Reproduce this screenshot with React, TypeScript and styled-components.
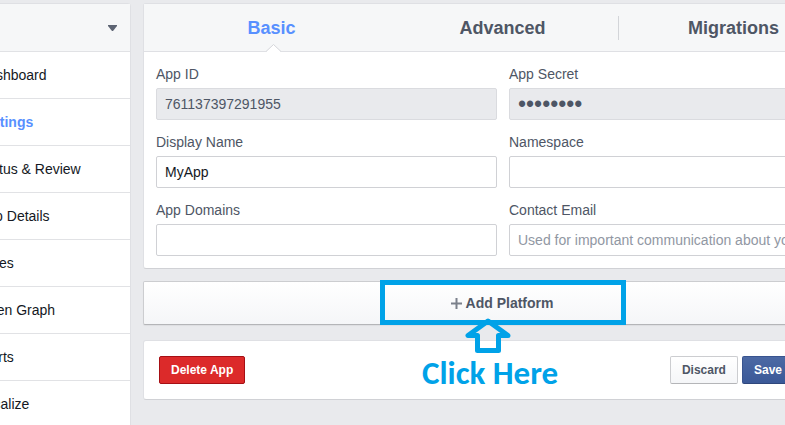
import React from "react";
import styled, { createGlobalStyle } from "styled-components";

const GlobalStyle = createGlobalStyle`
  *, *::before, *::after { box-sizing: border-box; }
  body {
    margin: 0;
    overflow: hidden;
    background: #e9eaed;
    color: #4e5665;
    font-family: "Liberation Sans", Arial, sans-serif;
    font-size: 14px;
    line-height: 20px;
  }
  button, input { font: inherit; }
`;

const Page = styled.div`
  display: flex;
  align-items: flex-start;
  gap: 12px;
  min-height: 100vh;
  padding-top: 3px;
`;

const Sidebar = styled.nav`
  flex: none;
  width: 168px;
  margin-left: -37px;
  background: #fff;
  border: 1px solid #dfe0e4;
  border-radius: 3px;
`;

const AppSwitcher = styled.button`
  display: flex;
  align-items: center;
  justify-content: flex-end;
  width: 100%;
  height: 47px;
  padding: 0 13px;
  border: 0;
  background: #f6f7f8;
`;

const SideLink = styled.a<{ $active?: boolean }>`
  display: block;
  padding: 13px 14px;
  border-top: 1px solid #e1e2e5;
  color: ${(p) => (p.$active ? "#5890ff" : "#141823")};
  font-weight: ${(p) => (p.$active ? "bold" : "normal")};
  text-decoration: none;
  white-space: nowrap;
`;

const Main = styled.main`
  flex: 1;
  min-width: 0;
  margin-right: -78px;
`;

const Card = styled.section`
  background: #fff;
  border: 1px solid #dfe0e4;
  border-bottom-color: #d0d1d5;
  border-radius: 3px;
`;

const Tabs = styled.div`
  display: grid;
  grid-template-columns: repeat(3, 1fr);
  padding: 0 13px 0 12px;
  background: #f6f7f8;
  border-bottom: 1px solid #dfe0e4;
`;

const Tab = styled.button<{ $active?: boolean }>`
  position: relative;
  height: 47px;
  padding: 0;
  border: 0;
  background: none;
  color: ${(p) => (p.$active ? "#5890ff" : "#4e5665")};
  font-size: 18px;
  font-weight: bold;

  & + &::before {
    content: "";
    position: absolute;
    left: 0;
    top: 12px;
    bottom: 11px;
    border-left: 1px solid #d3d5d9;
  }
`;

const Notch = styled.svg`
  position: absolute;
  left: 50%;
  bottom: -1px;
  margin-left: -6px;
`;

const Fields = styled.div`
  display: grid;
  grid-template-columns: 1fr 1fr;
  gap: 12px;
  padding: 12px;
`;

const Field = styled.label`
  display: grid;
  gap: 4px;
`;

const TextBox = styled.input`
  width: 100%;
  height: 32px;
  padding: 0 8px;
  border: 1px solid #d0d1d5;
  border-radius: 2px;
  background: #fff;
  color: #141823;

  &::placeholder { color: #9197a3; opacity: 1; }
  &:disabled {
    background: #e9eaed;
    border-color: #dadbdf;
    color: #4e5665;
  }
  &[type="password"] { font-size: 23px; }
`;

const Platform = styled.div`
  position: relative;
  margin: 12px 0 15px;
`;

const AddButton = styled.button`
  display: flex;
  align-items: center;
  justify-content: center;
  gap: 4px;
  width: 100%;
  height: 44px;
  padding: 0 2px 0 0;
  border: 1px solid #cccdd0;
  border-bottom-color: #b4b5b8;
  border-radius: 2px;
  background: linear-gradient(#fff, #f5f6f8);
  box-shadow: 0 1px 1px rgba(0, 0, 0, 0.05);
  color: #4e5665;
  font-weight: bold;
`;

const Highlight = styled.div`
  position: absolute;
  left: 50%;
  top: -1px;
  width: 246px;
  height: 45px;
  margin-left: -123px;
  border: 5px solid #00a2e8;
  pointer-events: none;
`;

const Callout = styled.div`
  position: absolute;
  left: 50%;
  top: 37px;
  margin-left: -81px;
  color: #00a2e8;
  font-family: Carlito, Lato, sans-serif;
  font-size: 33px;
  font-weight: bold;
  line-height: 40px;
  white-space: nowrap;
  pointer-events: none;
`;

const Arrow = styled.svg`
  display: block;
  margin-left: 43px;
`;

const Actions = styled(Card)`
  display: flex;
  gap: 4px;
  padding: 15px 14px 15px 15px;
`;

const variants = {
  danger: { bg: "#dc2a2a", edge: "#a60f14", bottom: "#a60f14", fg: "#fff" },
  plain: { bg: "linear-gradient(#fff, #f5f6f8)", edge: "#cccdd0", bottom: "#b4b5b8", fg: "#4e5665" },
  primary: { bg: "linear-gradient(#4c69a4, #3b5998)", edge: "#39548f", bottom: "#2f477c", fg: "#fff" },
};

const Button = styled.button<{ $kind: keyof typeof variants }>`
  height: 28px;
  padding: 0 11px;
  border: 1px solid ${(p) => variants[p.$kind].edge};
  border-bottom-color: ${(p) => variants[p.$kind].bottom};
  border-radius: 2px;
  background: ${(p) => variants[p.$kind].bg};
  color: ${(p) => variants[p.$kind].fg};
  font-size: 12px;
  font-weight: bold;
  white-space: nowrap;
`;

const Spacer = styled.span`
  flex: 1;
`;

const links = [
  "Dashboard",
  "Settings",
  "Status & Review",
  "App Details",
  "Roles",
  "Open Graph",
  "Alerts",
  "Localize",
];

const fields: { label: string; props: React.InputHTMLAttributes<HTMLInputElement> }[] = [
  { label: "App ID", props: { defaultValue: "761137397291955", disabled: true } },
  { label: "App Secret", props: { type: "password", defaultValue: "12345678", disabled: true } },
  { label: "Display Name", props: { defaultValue: "MyApp" } },
  { label: "Namespace", props: {} },
  { label: "App Domains", props: {} },
  {
    label: "Contact Email",
    props: { placeholder: "Used for important communication about your app" },
  },
];

export default function App() {
  return (
    <>
      <GlobalStyle />
      <Page>
        <Sidebar>
          <AppSwitcher aria-label="Switch app">
            <svg width="9" height="6" viewBox="0 0 9 6" aria-hidden="true">
              <path d="M0 0h9v1L5 6H4L0 1z" fill="#5d6473" />
            </svg>
          </AppSwitcher>
          {links.map((name) => (
            <SideLink key={name} href="#" $active={name === "Settings"}>
              {name}
            </SideLink>
          ))}
        </Sidebar>

        <Main>
          <Card>
            <Tabs role="tablist">
              <Tab role="tab" aria-selected="true" $active>
                Basic
                <Notch width="15" height="8" viewBox="0 0 15 8" aria-hidden="true">
                  <path d="M0 8L7.500 .5L15 8z" fill="#fff" />
                  <path d="M0 7.500L7.500 .5L15 7.500" fill="none" stroke="#d5d6da" />
                </Notch>
              </Tab>
              <Tab role="tab" aria-selected="false">Advanced</Tab>
              <Tab role="tab" aria-selected="false">Migrations</Tab>
            </Tabs>
            <Fields>
              {fields.map(({ label, props }) => (
                <Field key={label}>
                  {label}
                  <TextBox type="text" {...props} />
                </Field>
              ))}
            </Fields>
          </Card>

          <Platform>
            <AddButton>
              <svg width="11" height="11" viewBox="0 0 11 11" aria-hidden="true">
                <path d="M5.500 0v11M0 5.500h11" stroke="#7b808b" strokeWidth="2" />
              </svg>
              Add Platform
            </AddButton>
            <Highlight />
            <Callout>
              <Arrow width="46" height="35" viewBox="0 0 46 35" aria-hidden="true">
                <path
                  d="M23 3L3 17.500H12.500V32.500H33.500V17.500H43L23 3z"
                  fill="none"
                  stroke="#00a2e8"
                  strokeWidth="5"
                  strokeLinejoin="round"
                />
              </Arrow>
              Click Here
            </Callout>
          </Platform>

          <Actions>
            <Button $kind="danger">Delete App</Button>
            <Spacer />
            <Button $kind="plain">Discard</Button>
            <Button $kind="primary">Save Changes</Button>
          </Actions>
        </Main>
      </Page>
    </>
  );
}
